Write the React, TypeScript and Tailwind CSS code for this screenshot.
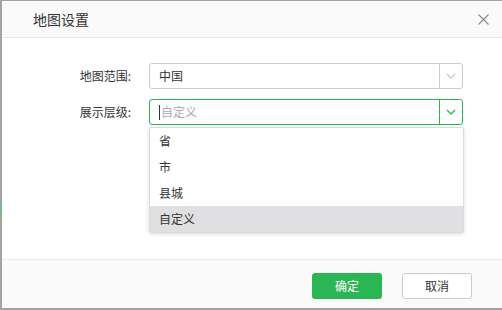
import { useState } from "react"

const levels = ["省", "市", "县城", "自定义"]

function Chevron({ color }: { color: string }) {
  return (
    <svg width="10" height="6" viewBox="0 0 10 6" fill="none">
      <path d="M1 1l4 4 4-4" stroke={color} strokeWidth="1.3" />
    </svg>
  )
}

export default function App() {
  const [active] = useState("自定义")

  return (
    <div
      className="flex w-[502px] h-[310px] bg-[#a3a3a3] overflow-hidden"
      style={{ fontFamily: '"Noto Sans CJK SC", "Noto Sans", sans-serif' }}
    >
      <div className="flex flex-col w-[2px] shrink-0">
        <div className="h-[202px]" />
        <div className="h-[16px] bg-[#7fb58a]" />
      </div>
      <div className="mt-[1px] flex flex-col w-[500px] h-[307px] bg-white text-[#333]">
        {/* header */}
        <div className="flex items-center justify-between h-[37px] shrink-0 bg-[#fafafa] border-b border-[#e8e8e8] pl-[31px] pr-[13px]">
          <span className="text-[14px] leading-none">地图设置</span>
          <svg width="11" height="11" viewBox="0 0 11 11">
            <path d="M0.5 0.5l10 10M10.5 0.5l-10 10" stroke="#8a8a8a" strokeWidth="1.1" />
          </svg>
        </div>

        {/* body */}
        <div className="flex-1 pt-[25px] text-[12px]">
          <div className="flex items-center h-[26px]">
            <div className="w-[129px] text-right">地图范围:</div>
            <div className="ml-[18px] flex w-[314px] h-[26px] border border-[#cccccc] rounded-[3px]">
              <div className="flex-1 flex items-center pl-[9px]">中国</div>
              <div className="w-[23px] flex items-center justify-center border-l border-[#cccccc]">
                <Chevron color="#c8c8c8" />
              </div>
            </div>
          </div>

          <div className="flex items-center h-[26px] mt-[10px]">
            <div className="w-[129px] text-right">展示层级:</div>
            <div className="relative ml-[18px] w-[314px] h-[26px]">
              <div className="flex w-full h-full border border-[#2bb656] rounded-[3px]">
                <div className="flex-1 flex items-center pl-[9px] text-[#aaaaaa]">
                  <span className="w-px h-[15px] bg-[#333] mr-[1px]" />
                  自定义
                </div>
                <div className="w-[23px] flex items-center justify-center border-l border-[#2bb656]">
                  <Chevron color="#2bb656" />
                </div>
              </div>
              <div className="absolute left-0 top-[28px] w-[315px] bg-white border border-[#dcdcdc] rounded-[2px] shadow-[0_1px_4px_rgba(0,0,0,0.15)]">
                {levels.map((l) => (
                  <div
                    key={l}
                    className={`flex items-center h-[26px] pl-[9px] ${l === active ? "bg-[#e0e0e2]" : ""}`}
                  >
                    {l}
                  </div>
                ))}
              </div>
            </div>
          </div>
        </div>

        {/* footer */}
        <div className="flex justify-end items-start gap-[20px] h-[49px] shrink-0 bg-[#fafafa] border-t border-[#e8e8e8] pt-[13px] pr-[30px] text-[12px]">
          <button className="w-[70px] h-[26px] rounded-[3px] bg-[#2bb656] text-white">确定</button>
          <button className="w-[70px] h-[26px] rounded-[3px] bg-white border border-[#cccccc] text-[#333]">取消</button>
        </div>
      </div>
    </div>
  )
}
